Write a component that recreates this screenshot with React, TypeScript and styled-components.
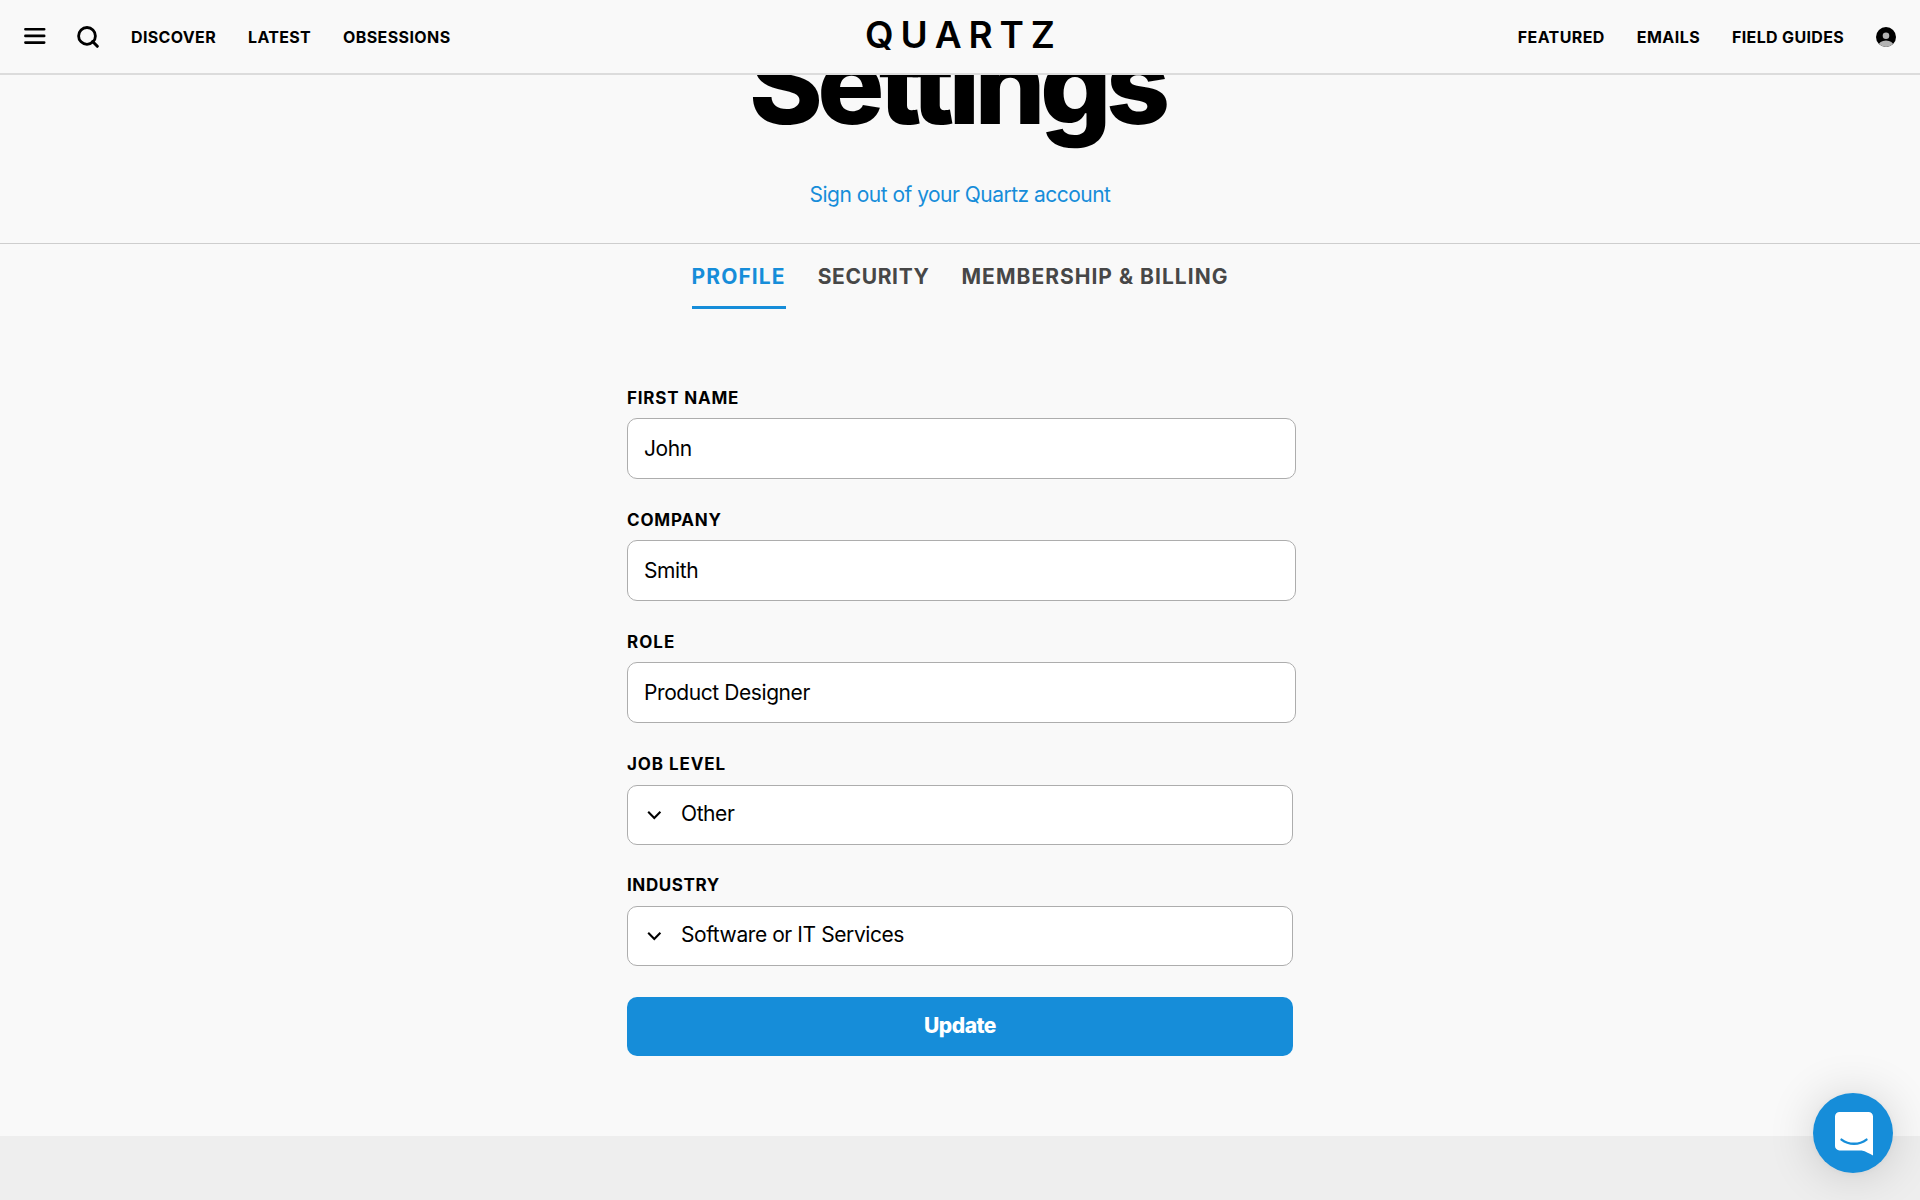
import React from "react"
import styled, { createGlobalStyle } from "styled-components"

const GlobalStyle = createGlobalStyle`
  :root {
    --accent: #168dd9;
    --background: #f9f9f9;
  }

  * {
    box-sizing: border-box;
  }

  body {
    margin: 0;
    background-color: var(--background);
    color: black;
    font-family: Inter, "Liberation Sans", sans-serif;
    overflow: hidden;
  }

  h1 {
    margin: 0;
  }

  a {
    color: inherit;
    text-decoration: none;
  }
`

const Header = styled.header`
  position: fixed;
  top: 0;
  left: 0;
  right: 0;
  z-index: 1;
  display: grid;
  grid-template-columns: 1fr auto 1fr;
  align-items: center;
  height: 75px;
  padding: 0 24px;
  background-color: var(--background);
  border-bottom: 2px solid #dcdcdc;
`

const Nav = styled.nav<{ $end?: boolean }>`
  display: flex;
  align-items: center;
  justify-content: ${({ $end }) => ($end ? "flex-end" : "flex-start")};
  gap: 32px;

  svg {
    display: block;
    flex: none;
  }
`

const NavIcons = styled.div`
  display: flex;
  align-items: center;
  gap: 31px;
`

const NavLink = styled.a<{ $tracking: number }>`
  font-size: 16px;
  font-weight: 700;
  line-height: 24px;
  letter-spacing: ${({ $tracking }) => $tracking}px;
  white-space: nowrap;
`

const Logo = styled.a`
  margin: -3px -6.9px 0 0;
  font-size: 37px;
  font-weight: 600;
  line-height: 46px;
  letter-spacing: 6.9px;
  font-kerning: none;
`

const Hero = styled.section`
  display: flex;
  flex-direction: column;
  align-items: center;
  padding: 23px 0 33px;
  border-bottom: 1px solid #cecece;
`

const Title = styled.h1`
  margin-right: 6.5px;
  font-size: 112px;
  font-weight: 800;
  line-height: 120px;
  letter-spacing: -5.7px;
`

const SignOut = styled.a`
  margin-top: 37px;
  font-size: 21px;
  line-height: 30px;
  letter-spacing: -0.52px;

  && {
    color: var(--accent);
  }
`

const Tabs = styled.div`
  display: flex;
  justify-content: center;
  gap: 32px;
  padding-top: 18px;
`

const Tab = styled.a<{ $active?: boolean; $tracking: number }>`
  padding-bottom: 14px;
  border-bottom: 3px solid
    ${({ $active }) => ($active ? "var(--accent)" : "transparent")};
  font-size: 21px;
  font-weight: 700;
  line-height: 30px;
  letter-spacing: ${({ $tracking }) => $tracking}px;

  && {
    color: ${({ $active }) => ($active ? "var(--accent)" : "#474747")};
  }
`

const Form = styled.form`
  display: flex;
  flex-direction: column;
  width: 666px;
  margin: 77px auto 80px;
`

const Field = styled.label`
  display: flex;
  flex-direction: column;
  margin-bottom: 29px;
`

const SelectField = styled(Field)`
  margin-bottom: 28px;
`

const FieldName = styled.span<{ $tracking: number }>`
  margin-bottom: 8px;
  font-size: 17px;
  font-weight: 700;
  line-height: 24px;
  letter-spacing: ${({ $tracking }) => $tracking}px;
`

const Input = styled.input`
  width: 669px;
  height: 61px;
  padding: 0 16px 1px;
  border: 1px solid #adadad;
  border-radius: 10px;
  background-color: white;
  color: black;
  font: 400 21px Inter, "Liberation Sans", sans-serif;
  letter-spacing: -0.42px;
  outline: none;
`

const Select = styled.div`
  display: flex;
  align-items: center;
  gap: 17px;
  height: 60px;
  margin-top: 1px;
  padding: 0 16px;
  border: 1px solid #adadad;
  border-radius: 10px;
  background-color: white;
  font-size: 21px;
  letter-spacing: -0.42px;

  span {
    padding-bottom: 3px;
  }
`

const Submit = styled.button`
  height: 59px;
  margin-top: 3px;
  padding: 0 0 2px;
  border: 0;
  border-radius: 10px;
  background-color: var(--accent);
  color: white;
  font: 800 21px Inter, "Liberation Sans", sans-serif;
  letter-spacing: -0.5px;
`

const Footer = styled.footer`
  height: 64px;
  background-color: #eeeeee;
`

const ChatButton = styled.button`
  position: fixed;
  right: 27px;
  bottom: 27px;
  display: flex;
  align-items: center;
  justify-content: center;
  width: 80px;
  height: 80px;
  padding: 1px 0 0 1px;
  border: 0;
  border-radius: 50%;
  background-color: var(--accent);
  box-shadow: 0 2px 48px rgba(0, 0, 0, 0.16), 0 1px 8px rgba(0, 0, 0, 0.05);
`

const MenuIcon = () => (
  <svg width="22" height="22" viewBox="0 0 22 22" stroke="black" strokeWidth="2.6" strokeLinecap="round">
    <path d="M1.4 3.2h18.8M1.4 9.9h18.8M1.4 16.6h18.8" />
  </svg>
)

const SearchIcon = () => (
  <svg width="22" height="22" viewBox="0 0 22 22" fill="none" stroke="black" strokeWidth="2.8">
    <circle cx="10" cy="9.9" r="8.4" />
    <path d="M15.6 15.5l4.7 4.8" strokeWidth="3" strokeLinecap="round" />
  </svg>
)

const AccountIcon = () => (
  <svg width="20" height="20" viewBox="0 0 20 20">
    <defs>
      <clipPath id="avatar">
        <circle cx="10" cy="10" r="10" />
      </clipPath>
    </defs>
    <g clipPath="url(#avatar)">
      <rect width="20" height="20" fill="black" />
      <circle cx="10" cy="8.7" r="3.3" fill="#b3b3b3" />
      <ellipse cx="10" cy="18.6" rx="7.6" ry="5.2" fill="#b3b3b3" />
    </g>
  </svg>
)

const ChevronIcon = () => (
  <svg width="20" height="20" viewBox="0 0 20 20" fill="none" stroke="black" strokeWidth="2.1">
    <path d="M4.2 6.8l6.1 6.1 6.1-6.1" />
  </svg>
)

const ChatIcon = () => (
  <svg width="38" height="44" viewBox="0 0 38 44">
    <path
      fill="white"
      d="M4.5 0h29A4.5 4.5 0 0 1 38 4.5V43.4C34.6 41.6 30.8 39.2 26.6 38.4H4.5A4.5 4.5 0 0 1 0 33.9V4.5A4.5 4.5 0 0 1 4.5 0z"
    />
    <path
      d="M6.5 27.6c7.4 5.6 17.6 5.6 25 0"
      fill="none"
      stroke="#168dd9"
      strokeWidth="2.4"
      strokeLinecap="round"
    />
  </svg>
)

const leftLinks = [
  { label: "DISCOVER", tracking: 0.35 },
  { label: "LATEST", tracking: 0.3 },
  { label: "OBSESSIONS", tracking: 0.4 },
]

const rightLinks = [
  { label: "FEATURED", tracking: 0.4 },
  { label: "EMAILS", tracking: 0.45 },
  { label: "FIELD GUIDES", tracking: 0.33 },
]

const tabs = [
  { label: "PROFILE", tracking: 1.1, active: true },
  { label: "SECURITY", tracking: 0.65 },
  { label: "MEMBERSHIP & BILLING", tracking: 1.02 },
]

const inputs = [
  { label: "FIRST NAME", value: "John", tracking: 0.8 },
  { label: "COMPANY", value: "Smith", tracking: 0.8 },
  { label: "ROLE", value: "Product Designer", tracking: 1 },
]

const selects = [
  { label: "JOB LEVEL", value: "Other", tracking: 0.9 },
  { label: "INDUSTRY", value: "Software or IT Services", tracking: 0.6 },
]

export default function App() {
  return (
    <>
      <GlobalStyle />
      <Header>
        <Nav>
          <NavIcons>
            <MenuIcon />
            <SearchIcon />
          </NavIcons>
          {leftLinks.map(link => (
            <NavLink key={link.label} href="#" $tracking={link.tracking}>
              {link.label}
            </NavLink>
          ))}
        </Nav>
        <Logo href="#">QUARTZ</Logo>
        <Nav $end>
          {rightLinks.map(link => (
            <NavLink key={link.label} href="#" $tracking={link.tracking}>
              {link.label}
            </NavLink>
          ))}
          <AccountIcon />
        </Nav>
      </Header>
      <main>
        <Hero>
          <Title>Settings</Title>
          <SignOut href="#">Sign out of your Quartz account</SignOut>
        </Hero>
        <Tabs>
          {tabs.map(tab => (
            <Tab key={tab.label} href="#" $active={tab.active} $tracking={tab.tracking}>
              {tab.label}
            </Tab>
          ))}
        </Tabs>
        <Form>
          {inputs.map(field => (
            <Field key={field.label}>
              <FieldName $tracking={field.tracking}>{field.label}</FieldName>
              <Input defaultValue={field.value} />
            </Field>
          ))}
          {selects.map(field => (
            <SelectField key={field.label}>
              <FieldName $tracking={field.tracking}>{field.label}</FieldName>
              <Select>
                <ChevronIcon />
                <span>{field.value}</span>
              </Select>
            </SelectField>
          ))}
          <Submit type="button">Update</Submit>
        </Form>
      </main>
      <Footer />
      <ChatButton aria-label="Open chat">
        <ChatIcon />
      </ChatButton>
    </>
  )
}
